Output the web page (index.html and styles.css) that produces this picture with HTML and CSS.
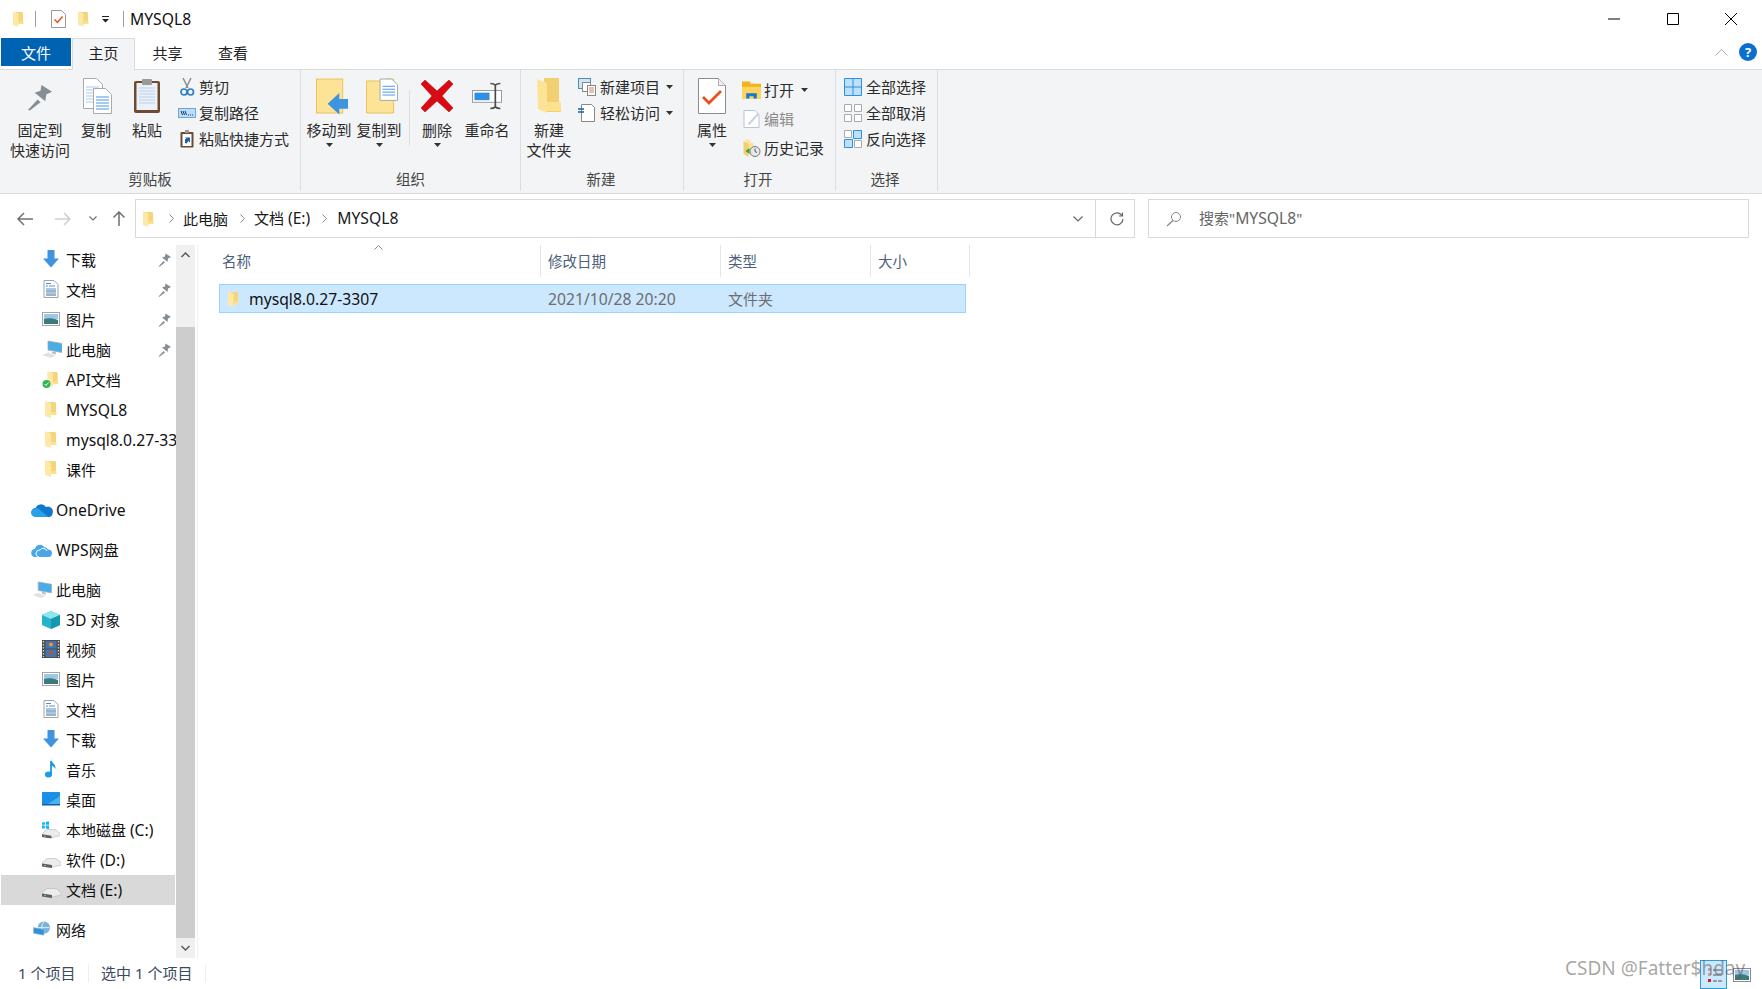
FILE: index.html
```html
<!DOCTYPE html>
<html lang="zh-CN">
<head>
<meta charset="utf-8">
<title>MYSQL8</title>
<link rel="stylesheet" href="styles.css">
</head>
<body>
<svg class="defs" aria-hidden="true">
  <symbol id="folder" viewBox="0 0 13 17">
    <path d="M4 1h7l1 1v11.500H5z" fill="#f4d57c"/>
    <path d="M1 0l6 2.500V17l-6-2z" fill="#fde8a6"/>
    <path d="M7 11h5.500v3H7z" fill="#fbe28f"/>
  </symbol>
  <symbol id="pin" viewBox="0 0 28 28">
    <path d="M15 1l11 7-6 3-1 7-11-9 6-2z" fill="#868e95"/>
    <path d="M1 27l10-11 3 3L3 27.500z" fill="#868e95"/>
  </symbol>
  <symbol id="dl" viewBox="0 0 18 18">
    <path d="M5.500 0h7v8.500H17L9 17.500 1 8.500h4.500z" fill="#3f94df"/>
  </symbol>
  <symbol id="doc" viewBox="0 0 16 18">
    <path d="M1 .5h10l4 4v13H1z" fill="#fff" stroke="#a4a4a4"/>
    <path d="M3 3.500h5M3 6h2M6 6h6M3 9h10M3 11h10M3 13h10M3 15h10" stroke="#4a93d6"/>
    <path d="M3 11h10M3 15h10" stroke="#9a9a9a"/>
  </symbol>
  <symbol id="pic" viewBox="0 0 18 14">
    <rect x=".5" y=".5" width="17" height="13" fill="#fff" stroke="#a5a5a5"/>
    <path d="M2 2h14v5H2z" fill="#9cc6ea"/>
    <path d="M2 7c4-1 9-1 14 1v4H2z" fill="#3d7b78"/>
  </symbol>
  <symbol id="pc" viewBox="0 0 20 18">
    <path d="M6 1l14 2.500v9L6 10z" fill="#45aeea" stroke="#a8a8a8" stroke-width=".8"/>
    <path d="M10 11.500l4 .8v2l-4-.8z" fill="#bdbdbd"/>
    <path d="M0 15l6-2.500 8 3L9 18z" fill="#e2e2e2"/>
  </symbol>
  <symbol id="cloud" viewBox="0 0 22 14">
    <path d="M5 13.500a4.500 4.500 0 0 1-.5-9A6 6 0 0 1 15 3.500 5 5 0 0 1 21.500 10c0 2-1.500 3.500-3.500 3.500z" fill="#0f79cf"/>
    <path d="M5 13.500a4.500 4.500 0 0 1-.5-9c2 0 4 1 5 2.500l8 6.500z" fill="#2aa0e8"/>
  </symbol>
  <symbol id="cloud2" viewBox="0 0 22 14">
    <path d="M4.500 13.500a4 4 0 0 1-.5-8A5 5 0 0 1 13 3.500a4.500 4.500 0 0 1 4 2.500 3.800 3.800 0 0 1 1 7.500z" fill="#4aa6ea"/>
    <path d="M8 13.500a3.500 3.500 0 0 1 1-7 4 4 0 0 1 7 1" fill="none" stroke="#fff" stroke-width="1"/>
  </symbol>
  <symbol id="hdd" viewBox="0 0 19 11">
    <path d="M0 6L5 1.500h9l5 4V8L9 10.500 0 9z" fill="#ececec" stroke="#b5b5b5" stroke-width=".6"/>
    <path d="M0 6.500l10 1.500v3L0 9.500z" fill="#5f5f5f"/>
    <path d="M2 8h2v1H2z" fill="#5fd07c"/>
  </symbol>
</svg>

<header class="titlebar">
  <svg class="i-title"><use href="#folder"/></svg>
  <span class="tsep tsep-a"></span>
  <svg class="qa-doc" viewBox="0 0 15 18"><path d="M.5.500h10l4 4v13H.5z" fill="#fff" stroke="#999"/><path d="M3.500 9.500l3 3 5-6" fill="none" stroke="#e8501f" stroke-width="1.500"/></svg>
  <svg class="i-title i-title-b"><use href="#folder"/></svg>
  <svg class="qa-drop" viewBox="0 0 7 7"><path d="M0 0h7v1H0zM0 3h7L3.500 6.500z" fill="#222"/></svg>
  <span class="tsep tsep-b"></span>
  <span class="title lat">MYSQL8</span>
  <div class="winctl">
    <svg viewBox="0 0 12 12"><path d="M0 6h12" stroke="#000"/></svg>
    <svg viewBox="0 0 12 12"><path d="M.5.500h11v11H.5z" fill="none" stroke="#000"/></svg>
    <svg viewBox="0 0 12 12"><path d="M0 0l12 12M12 0L0 12" stroke="#000"/></svg>
  </div>
</header>

<nav class="tabs">
  <span class="tab tab-file">文件</span>
  <span class="tab tab-on">主页</span>
  <span class="tab tab-share">共享</span>
  <span class="tab tab-view">查看</span>
  <span class="tabs-right">
    <svg class="collapse" viewBox="0 0 13 7"><path d="M.5 6.500l6-6 6 6" fill="none" stroke="#aaa"/></svg>
    <span class="help">?</span>
  </span>
</nav>

<section class="ribbon">
  <div class="group g1">
    <div class="gbody">
      <div class="lg w64"><span class="lgicon"><svg class="ic30"><use href="#pin"/></svg></span><span>固定到<br>快速访问</span></div>
      <div class="lg w48"><span class="lgicon"><svg class="ic-big ic-copy" viewBox="0 0 30 36"><path d="M.5.500h13l6 6v24H.5z" fill="#fff" stroke="#aaa"/><path d="M3 9h13M3 12h13M3 15h13M3 18h13M3 21h13M3 24h13" stroke="#a9c8ee"/><path d="M10.500 10.500h12l6 6v19h-18z" fill="#fff" stroke="#aaa"/><path d="M13 19h13M13 22h13M13 25h13M13 28h13M13 31h13" stroke="#4c95e4"/></svg></span><span>复制</span></div>
      <div class="lg w54"><span class="lgicon"><svg class="ic-big" viewBox="0 0 28 36"><rect x="1" y="3" width="26" height="32" rx="2" fill="#6d4a30"/><rect x="3.500" y="5" width="21" height="27" fill="#eaf1f8"/><path d="M6 10h16M6 13h16M6 16h16M6 19h16M6 22h16M6 25h16" stroke="#bcd2e8"/><rect x="9" y="1" width="10" height="6" rx="1" fill="#9a9a9a"/></svg></span><span>粘贴</span></div>
      <div class="col c1">
        <div class="sm"><svg class="sic" viewBox="0 0 14 18"><path d="M3 0l5 10M11 0L6 10" stroke="#8d8d8d" stroke-width="1.500"/><circle cx="4" cy="14" r="3" fill="none" stroke="#2a80c9" stroke-width="1.700"/><circle cx="10.500" cy="14" r="3" fill="none" stroke="#2a80c9" stroke-width="1.700"/></svg><span>剪切</span></div>
        <div class="sm"><svg class="sic" viewBox="0 0 18 12"><rect x=".5" y="1.500" width="17" height="9" fill="#bddcf7" stroke="#6aa8dc"/><path d="M3 4l1.500 4M5 4l1.500 4M7 4l1.500 4" stroke="#1a3a5a"/><path d="M10 8h1M12 8h1M14 8h1" stroke="#1a3a5a"/></svg><span>复制路径</span></div>
        <div class="sm"><svg class="sic" viewBox="0 0 14 18"><rect x=".5" y="2" width="13" height="15.500" rx="1" fill="#6d4a30"/><rect x="2.500" y="4" width="9" height="12" fill="#fff"/><rect x="5" y="0" width="4" height="3" fill="#999"/><path d="M5 13V9h1.500L5 7.500h5v5L8.500 11 6.500 13.500z" fill="#1d5fa8"/></svg><span>粘贴快捷方式</span></div>
      </div>
    </div>
    <div class="glabel">剪贴板</div>
  </div>

  <div class="group g2">
    <div class="gbody">
      <div class="lg w56"><span class="lgicon"><svg class="ic-mv" viewBox="0 0 34 37"><rect x=".5" y=".5" width="27" height="35" fill="#fde396" stroke="#eac25a"/><path d="M12 26l12-11v6h9v10h-9v6z" fill="#3f94df"/></svg></span><span>移动到</span><svg class="caret" viewBox="0 0 7 4"><path d="M0 0h7L3.500 4z"/></svg></div>
      <div class="lg w44"><span class="lgicon"><svg class="ic-mv" viewBox="0 0 34 37"><path d="M.5 2.500h20v-2h8v35h-28z" fill="#fde396" stroke="#eac25a"/><path d="M14.500.500h12l6 6v16h-18z" fill="#fff" stroke="#9aa"/><path d="M17 8h13M17 11h13M17 14h13M17 17h13" stroke="#4c95e4"/></svg></span><span>复制到</span><svg class="caret" viewBox="0 0 7 4"><path d="M0 0h7L3.500 4z"/></svg></div>
      <span class="vsep"></span>
      <div class="lg w54"><span class="lgicon"><svg class="ic-x" viewBox="0 0 32 32"><path d="M4 0l12 11L28 0l4 4-11 12 11 12-4 4-12-11L4 32l-4-4 11-12L0 4z" fill="#d90a14" stroke="#a00" stroke-width=".5"/></svg></span><span>删除</span><svg class="caret" viewBox="0 0 7 4"><path d="M0 0h7L3.500 4z"/></svg></div>
      <div class="lg w46"><span class="lgicon"><svg class="ic-big2" viewBox="0 0 36 34"><rect x=".5" y="10.500" width="35" height="14" fill="#fff" stroke="#8a8a8a"/><rect x="3" y="13" width="18" height="9" fill="#2f8fe0"/><path d="M22 2c3 0 5 1 6 2 1-1 3-2 6-2M28 4v26M22 32c3 0 5-1 6-2 1 1 3 2 6 2" fill="none" stroke="#4a4a4a" stroke-width="2"/></svg></span><span>重命名</span></div>
    </div>
    <div class="glabel">组织</div>
  </div>

  <div class="group g3">
    <div class="gbody">
      <div class="lg w56"><span class="lgicon"><svg class="ic-nf" viewBox="0 0 24 35"><path d="M7 0h15v27h2v7H8z" fill="#f2cf70"/><path d="M0 1l10 4v30L1 31z" fill="#fde396"/><path d="M10 24h14v9H10z" fill="#fbe28f"/></svg></span><span>新建<br>文件夹</span></div>
      <div class="col c3">
        <div class="sm"><svg class="sic2" viewBox="0 0 18 18"><rect x=".5" y=".5" width="12" height="10" fill="#cfe5f8" stroke="#5a87ad"/><rect x="4.500" y="4.500" width="8" height="9" fill="#fff" stroke="#888"/><rect x="9.500" y="7.500" width="8" height="10" fill="#fff" stroke="#888"/><path d="M11 10h5M11 12h5M11 14h5" stroke="#e07a7a"/></svg><span>新建项目</span><svg class="mini" viewBox="0 0 7 4"><path d="M0 0h7L3.500 4z"/></svg></div>
        <div class="sm"><svg class="sic2" viewBox="0 0 18 18"><path d="M3.500.500h10l3 3v14h-13z" fill="#fff" stroke="#888"/><path d="M0 5h6M0 8h6" stroke="#1d5fa8" stroke-width="1.300"/></svg><span>轻松访问</span><svg class="mini" viewBox="0 0 7 4"><path d="M0 0h7L3.500 4z"/></svg></div>
      </div>
    </div>
    <div class="glabel">新建</div>
  </div>

  <div class="group g4">
    <div class="gbody">
      <div class="lg w56"><span class="lgicon"><svg class="ic-big2" viewBox="0 0 28 36"><path d="M.5.500h20l7 7v28H.5z" fill="#fff" stroke="#8d8d8d"/><path d="M20.500.500v7h7" fill="#eee" stroke="#aaa"/><path d="M5 19l6 6L23 13" fill="none" stroke="#e8501f" stroke-width="2.800"/></svg></span><span>属性</span><svg class="caret" viewBox="0 0 7 4"><path d="M0 0h7L3.500 4z"/></svg></div>
      <div class="col c4">
        <div class="sm"><svg class="sic3" viewBox="0 0 18 16"><path d="M0 0h8v2h10v14H0z" fill="#f2b21d"/><path d="M0 5h18v11H0z" fill="#fcd45f"/><path d="M4 16v-5h10v5h-3v-2H7v2z" fill="#1479d0"/></svg><span>打开</span><svg class="mini mini-o" viewBox="0 0 7 4"><path d="M0 0h7L3.500 4z"/></svg></div>
        <div class="sm sm-dim"><svg class="sic3" viewBox="0 0 18 18"><path d="M1.500.500h11l4 4v13h-15z" fill="#fff" stroke="#b8c4d8"/><path d="M5 14L15 3l1.500 1.500L7 15z" fill="#c8d4e4"/></svg><span>编辑</span></div>
        <div class="sm"><svg class="sic3" viewBox="0 0 18 18"><path d="M3 0l5 2v2h3v10H4z" fill="#fde396"/><path d="M1 2l5 3v13l-5-3z" fill="#f2cf70"/><circle cx="12.500" cy="12.500" r="5" fill="#e8e8e8" stroke="#777"/><path d="M12.500 9.500v3l2 1" fill="none" stroke="#555"/><path d="M3 12l4-3v6z" fill="#2aa83a"/></svg><span>历史记录</span></div>
      </div>
    </div>
    <div class="glabel">打开</div>
  </div>

  <div class="group g5">
    <div class="gbody">
      <div class="col c5">
        <div class="sm"><svg class="sic" viewBox="0 0 18 18"><path d="M.5.500h17v17H.5z" fill="#bfe0fa" stroke="#2f8fe0"/><path d="M9 0v18M0 9h18" stroke="#2f8fe0"/></svg><span>全部选择</span></div>
        <div class="sm"><svg class="sic" viewBox="0 0 18 18"><path d="M.5.500h7v7h-7zM10.500.500h7v7h-7zM.5 10.500h7v7h-7zM10.500 10.500h7v7h-7z" fill="#fff" stroke="#aaa"/></svg><span>全部取消</span></div>
        <div class="sm"><svg class="sic" viewBox="0 0 18 18"><path d="M.5.500h7v7h-7zM10.500 10.500h7v7h-7z" fill="#fff" stroke="#aaa"/><path d="M9.500.500h8v8h-8zM.5 9.500h8v8h-8z" fill="#bfe0fa" stroke="#2f8fe0"/></svg><span>反向选择</span></div>
      </div>
    </div>
    <div class="glabel">选择</div>
  </div>
</section>

<section class="addr">
  <div class="navbtns">
    <svg class="nb" viewBox="0 0 16 14"><path d="M7 1L1 7l6 6M1 7h15" fill="none" stroke="#6f6f6f" stroke-width="1.500"/></svg>
    <svg class="nb nb-fw" viewBox="0 0 16 14"><path d="M9 1l6 6-6 6M15 7H0" fill="none" stroke="#cfcfcf" stroke-width="1.500"/></svg>
    <svg class="nb-down" viewBox="0 0 8 5"><path d="M.5.500L4 4 7.500.500" fill="none" stroke="#6f6f6f" stroke-width="1.200"/></svg>
    <svg class="nb-up" viewBox="0 0 12 15"><path d="M.5 6.500L6 1l5.500 5.500M6 1v14" fill="none" stroke="#6f6f6f" stroke-width="1.500"/></svg>
  </div>
  <div class="crumbs">
    <svg class="i-crumb"><use href="#folder"/></svg>
    <svg class="gt gt-a" viewBox="0 0 5 9"><path d="M.5.500l4 4-4 4" fill="none" stroke="#888"/></svg>
    <span class="cb">此电脑</span>
    <svg class="gt gt-b" viewBox="0 0 5 9"><path d="M.5.500l4 4-4 4" fill="none" stroke="#888"/></svg>
    <span class="cb">文档 <span class="lat">(E:)</span></span>
    <svg class="gt gt-c" viewBox="0 0 5 9"><path d="M.5.500l4 4-4 4" fill="none" stroke="#888"/></svg>
    <span class="cb lat">MYSQL8</span>
    <svg class="cdrop" viewBox="0 0 10 6"><path d="M.5.500L5 5 9.500.500" fill="none" stroke="#666" stroke-width="1.200"/></svg>
    <span class="refresh"><svg viewBox="0 0 14 14"><path d="M12 3.500A6 6 0 1 0 13 7M12.500 .500v3.500H9" fill="none" stroke="#666" stroke-width="1.200"/></svg></span>
  </div>
  <div class="search">
    <svg class="mag" viewBox="0 0 16 16"><circle cx="10" cy="6" r="4.500" fill="none" stroke="#888"/><path d="M7 9.500L1 15" stroke="#888" stroke-width="1.300"/></svg>
    <span class="search-t">搜索"<span class="lat">MYSQL8</span>"</span>
  </div>
</section>

<main class="content">
  <aside class="side">
    <div class="tree">
      <div class="row"><svg class="ri"><use href="#dl"/></svg><span class="rt">下载</span><svg class="rpin"><use href="#pin"/></svg></div>
      <div class="row"><svg class="ri"><use href="#doc"/></svg><span class="rt">文档</span><svg class="rpin"><use href="#pin"/></svg></div>
      <div class="row"><svg class="ri"><use href="#pic"/></svg><span class="rt">图片</span><svg class="rpin"><use href="#pin"/></svg></div>
      <div class="row"><svg class="ri ri-pc"><use href="#pc"/></svg><span class="rt">此电脑</span><svg class="rpin"><use href="#pin"/></svg></div>
      <div class="row row-lat"><svg class="ri ri-f" viewBox="0 0 18 18"><use href="#folder" width="13" height="16" x="4" y="0"/><circle cx="4.500" cy="13" r="4" fill="#35b455"/><path d="M2.500 13l1.500 1.500 2.500-3" fill="none" stroke="#fff"/></svg><span class="rt"><span class="lat">API</span>文档</span></div>
      <div class="row row-lat"><svg class="ri ri-f"><use href="#folder" width="13" height="17" x="2" y="0"/></svg><span class="rt lat">MYSQL8</span></div>
      <div class="row row-lat"><svg class="ri ri-f"><use href="#folder" width="13" height="17" x="2" y="0"/></svg><span class="rt lat">mysql8.0.27-3307</span></div>
      <div class="row"><svg class="ri ri-f"><use href="#folder" width="13" height="17" x="2" y="0"/></svg><span class="rt">课件</span></div>

      <div class="row row-top row-0 row-lat"><svg class="ri0"><use href="#cloud"/></svg><span class="rt lat">OneDrive</span></div>
      <div class="row row-top row-0 row-lat"><svg class="ri0"><use href="#cloud2"/></svg><span class="rt"><span class="lat">WPS</span>网盘</span></div>
      <div class="row row-top row-0"><svg class="ri0"><use href="#pc"/></svg><span class="rt">此电脑</span></div>

      <div class="row row-lat"><svg class="ri" viewBox="0 0 18 18"><path d="M9 0l9 4v10l-9 4-9-4V4z" fill="#25b3c9"/><path d="M9 0l9 4-9 4-9-4z" fill="#8fe6ee"/><path d="M9 8v10l9-4V4z" fill="#1497b0"/></svg><span class="rt"><span class="lat">3D</span> 对象</span></div>
      <div class="row"><svg class="ri" viewBox="0 0 18 18"><rect width="18" height="18" fill="#4d4d4d"/><rect x="3.500" y="1" width="11" height="7.500" fill="#4b6fae"/><rect x="3.500" y="9.500" width="11" height="7.500" fill="#3d78b6"/><circle cx="9" cy="4.500" r="2" fill="#d4a13a"/><circle cx="9" cy="13" r="2" fill="#c74b30"/><path d="M1.500 1v16M16.500 1v16" stroke="#ccc" stroke-dasharray="1.500 1.500" stroke-width="1.300"/></svg><span class="rt">视频</span></div>
      <div class="row"><svg class="ri"><use href="#pic"/></svg><span class="rt">图片</span></div>
      <div class="row"><svg class="ri"><use href="#doc"/></svg><span class="rt">文档</span></div>
      <div class="row"><svg class="ri"><use href="#dl"/></svg><span class="rt">下载</span></div>
      <div class="row"><svg class="ri" viewBox="0 0 18 18"><path d="M9 1v13" stroke="#1b9be8" stroke-width="1.800"/><ellipse cx="6.500" cy="14.500" rx="3.600" ry="3" fill="#1b9be8"/><path d="M9 0c1 3 5 4 4.500 9-.5-2-3-3-4.500-3.500z" fill="#1b9be8"/></svg><span class="rt">音乐</span></div>
      <div class="row"><svg class="ri" viewBox="0 0 18 14"><rect width="18" height="13" rx=".5" fill="#1b8fe6"/><path d="M0 12h18v1.500H0z" fill="#0e5fa8"/><path d="M6 12L18 4v8z" fill="#4db1f0"/></svg><span class="rt">桌面</span></div>
      <div class="row row-lat"><svg class="ri" viewBox="0 0 19 18"><use href="#hdd" y="7" width="19" height="11"/><path d="M0 1l3-.5v3H0zM4 .3L7.500 0v3.500H4zM0 4.300h3v3H0zM4 4.300h3.500V8L4 7.500z" fill="#12b5f0"/></svg><span class="rt">本地磁盘 <span class="lat">(C:)</span></span></div>
      <div class="row row-lat"><svg class="ri ri-h"><use href="#hdd"/></svg><span class="rt">软件 <span class="lat">(D:)</span></span></div>
      <div class="row row-lat row-sel"><svg class="ri ri-h"><use href="#hdd"/></svg><span class="rt">文档 <span class="lat">(E:)</span></span></div>

      <div class="row row-top row-0"><svg class="ri0" viewBox="0 0 20 18"><circle cx="12" cy="7" r="6.500" fill="#7ab4dc"/><path d="M12 1c-3 3-3 9 0 12M6 7h12" fill="none" stroke="#e4f1fa"/><path d="M1 7l11 2v6L1 13z" fill="#2a93dc" stroke="#9fb4c4" stroke-width=".6"/></svg><span class="rt">网络</span></div>
    </div>
    <div class="sbar">
      <span class="sb-btn"><svg viewBox="0 0 9 6"><path d="M.5 5L4.500 1l4 4" fill="none" stroke="#555" stroke-width="1.400"/></svg></span>
      <span class="sb-track"></span>
      <span class="sb-thumb"></span>
      <span class="sb-btn sb-btn-d"><svg viewBox="0 0 9 6"><path d="M.5 1l4 4 4-4" fill="none" stroke="#555" stroke-width="1.400"/></svg></span>
    </div>
  </aside>

  <div class="files">
    <div class="fhead">
      <span class="fh fh-name">名称<svg class="sort" viewBox="0 0 9 5"><path d="M.5 4.500l4-4 4 4" fill="none" stroke="#8a8a8a"/></svg></span>
      <span class="fh fh-date">修改日期</span>
      <span class="fh fh-type">类型</span>
      <span class="fh fh-size">大小</span>
    </div>
    <div class="frow">
      <span class="fc fc-name lat"><svg class="fi"><use href="#folder"/></svg>mysql8.0.27-3307</span>
      <span class="fc fc-date lat">2021/10/28 20:20</span>
      <span class="fc fc-type">文件夹</span>
    </div>
  </div>
</main>

<footer class="status">
  <span class="st st-a">1 个项目</span>
  <span class="st st-b">选中 1 个项目</span>
  <span class="viewbtns">
    <span class="vb-on"><svg viewBox="0 0 18 20"><path d="M3 3h3v3H3zM3 8h3v3H3z" fill="#c9a0a0"/><path d="M3 14h3v3H3z" fill="#c8202a"/><path d="M8 5h9M8 10h9M8 16h4M13 16h4" stroke="#555"/></svg></span>
    <svg class="vb-off" viewBox="0 0 18 14"><rect x=".5" y=".5" width="17" height="13" fill="#fff" stroke="#8a8a8a"/><path d="M2 2h14v5H2z" fill="#9cc6ea"/><path d="M2 7c4-1 9-1 14 1v4H2z" fill="#3d7b78"/></svg>
  </span>
</footer>

<div class="watermark">CSDN @Fatter$hday</div>
</body>
</html>
```

FILE: styles.css
```css
* { box-sizing: border-box; }
html, body { margin: 0; height: 100%; }
body {
  width: 1762px;
  height: 989px;
  overflow: hidden;
  position: relative;
  background: #fff;
  color: #1a1a1a;
  font-family: "Noto Sans", "Noto Sans CJK SC", sans-serif;
  font-size: 15px;
  display: flex;
  flex-direction: column;
}
.defs { width: 0; height: 0; position: absolute; }
svg { display: block; flex: none; }
.lat { font-size: 15.700px; }

/* title bar */
.titlebar { height: 38px; display: flex; align-items: center; padding-left: 12px; flex: none; }
.i-title { width: 12px; height: 16px; }
.i-title-b { margin-left: 11px; }
.tsep { width: 1px; height: 16px; background: #a0a0a0; }
.tsep-a { margin-left: 11px; }
.tsep-b { margin-left: 14px; }
.qa-doc { width: 15px; height: 18px; margin-left: 15px; }
.qa-drop { width: 7px; height: 7px; margin-left: 13px; }
.title { margin-left: 6px; color: #111; padding-bottom: 1px; }
.winctl { margin-left: auto; display: flex; align-items: center; gap: 46.500px; padding-right: 25px; }
.winctl svg { width: 12px; height: 12px; }

/* tabs */
.tabs { height: 32px; display: flex; align-items: flex-start; position: relative; border-bottom: 1px solid #dadbdc; flex: none; padding-left: 1px; }
.tab { height: 28px; display: flex; align-items: center; justify-content: center; color: #222; }
.tab-file { width: 70px; background: #0063b1; color: #fff; }
.tab-on { width: 63px; height: 32px; background: #f3f4f6; border: 1px solid #dadbdc; border-bottom: 0; padding-bottom: 4px; margin-left: 1px; }
.tab-share { width: 65px; }
.tab-view { width: 66px; }
.tabs-right { margin-left: auto; display: flex; align-items: center; height: 28px; padding: 0 5px 0 0; gap: 11px; }
.collapse { width: 13px; height: 7px; }
.help { width: 18px; height: 18px; border-radius: 50%; background: #0a6fd0; color: #fff; font-size: 13px; font-weight: 700; display: flex; align-items: center; justify-content: center; }

/* ribbon */
.ribbon { height: 124px; background: #f3f4f6; border-bottom: 1px solid #dadbdc; display: flex; flex: none; padding-bottom: 2px; color: #2b2b2b; }
.group { display: flex; flex-direction: column; border-right: 1px solid #dcdde0; }
.gbody { height: 98px; display: flex; line-height: 20px; }
.glabel { text-align: center; height: 23px; line-height: 23px; font-size: 14.500px; color: #444; }
.g1 { width: 301px; }
.g1 .gbody { padding-left: 8px; }
.g2 { width: 220px; }
.g3 { width: 163px; }
.g3 .glabel { padding-right: 2px; }
.g4 { width: 152px; }
.g4 .glabel { padding-right: 3px; }
.g5 { width: 102px; }
.g5 .glabel { padding-right: 3px; }
.lg { display: flex; flex-direction: column; align-items: center; text-align: center; flex: none; white-space: nowrap; }
.lgicon { height: 50px; padding-top: 8px; display: flex; align-items: flex-start; justify-content: center; flex: none; }
.w64 { width: 64px; }
.w48 { width: 48px; }
.w54 { width: 54px; }
.w56 { width: 56px; }
.w44 { width: 44px; }
.w46 { width: 46px; }
.ic30 { width: 27px; height: 27px; margin-top: 6px; }
.ic-big { width: 30px; height: 36px; }
.ic-copy { margin-left: 3px; }
.ic-big2 { width: 30px; height: 36px; }
.ic-mv { width: 33px; height: 37px; margin-left: 7px; }
.ic-x { width: 32px; height: 32px; margin-top: 2px; }
.ic-nf { width: 24px; height: 35px; }
.caret { width: 7px; height: 4px; fill: #333; margin-top: 3px; }
.vsep { width: 1px; height: 56px; background: #dcdde0; margin: 20px 0 0 8px; flex: none; }
.col { display: flex; flex-direction: column; padding-top: 4px; }
.sm { height: 26px; display: flex; align-items: center; white-space: nowrap; gap: 3px; }
.sm > svg:first-child { flex: none; }
.sic { width: 18px; height: 18px; }
.sic2 { width: 20px; height: 18px; }
.sic3 { width: 19px; height: 18px; }
.c1 { margin-left: 4px; }
.c4 .sm { height: 29px; }
.c4 { padding-top: 5px; margin-left: 2px; }
.sm-dim { color: #8a8a8a; }
.c5 { margin-left: 8px; }
.c5 .sm { gap: 4px; }
.mini { width: 7px; height: 4px; fill: #333; margin-left: 3px; }
.mini-o { margin-left: 4px; }

/* address */
.addr { height: 51px; padding-top: 5px; padding-bottom: 7px; display: flex; flex: none; }
.navbtns { width: 135px; display: flex; align-items: center; padding-left: 17px; }
.nb { width: 16px; height: 14px; }
.nb-fw { margin-left: 22px; }
.nb-down { width: 8px; height: 5px; margin-left: 18px; }
.nb-up { width: 12px; height: 15px; margin-left: 16px; }
.crumbs { width: 1000px; border: 1px solid #d9d9d9; display: flex; align-items: center; padding-left: 6px; }
.i-crumb { width: 12px; height: 16px; }
.gt { width: 5px; height: 9px; }
.gt-a { margin-left: 15px; }
.gt-b, .gt-c { margin-left: 12px; }
.cb { margin-left: 9px; color: #1a1a1a; padding-bottom: 1px; }
.cb.lat { margin-left: 10px; }
.cdrop { width: 10px; height: 6px; margin-left: auto; margin-right: 12px; }
.refresh { width: 39px; height: 100%; border-left: 1px solid #d9d9d9; display: flex; align-items: center; justify-content: center; padding-left: 4px; }
.refresh svg { width: 14px; height: 14px; }
.search { width: 601px; margin-left: 13px; border: 1px solid #d9d9d9; display: flex; align-items: center; padding-left: 17px; gap: 17px; color: #666; }
.search-t { padding-bottom: 1px; }
.mag { width: 16px; height: 16px; }

/* content */
.content { height: 715px; display: flex; flex: none; }
.side { width: 198px; display: flex; border-right: 1px solid #f0f0f0; height: 713px; flex: none; }
.tree { width: 176px; overflow: hidden; flex: none; padding-left: 1px; }
.row { height: 30px; width: 174px; display: flex; align-items: center; padding: 0 0 2px 41px; position: relative; color: #111; }
.row-lat { padding-bottom: 0; }
.row-0 { padding-left: 30px; }
.row-top { margin-top: 10px; }
.row-sel { background: #d9d9d9; }
.ri { width: 18px; height: 18px; }
.ri-pc { width: 20px; margin-right: -2px; }
.ri-h { width: 19px; height: 11px; margin-right: -1px; margin-top: 5px; }
.ri0 { width: 22px; height: 17px; }
.rt { margin-left: 6px; white-space: nowrap; }
.row-0 .rt { margin-left: 3px; }
.rpin { width: 14px; height: 14px; position: absolute; left: 157px; top: 8px; }
.sbar { width: 19px; display: flex; flex-direction: column; flex: none; }
.sb-btn { height: 20px; background: #f0f0f0; display: flex; align-items: center; justify-content: center; }
.sb-btn svg { width: 9px; height: 6px; }
.sb-track { height: 62px; background: #f0f0f0; }
.sb-thumb { flex: 1; background: #cdcdcd; }

.files { flex: 1; padding-left: 21px; }
.fhead { height: 39px; width: 751px; display: flex; align-items: stretch; color: #4c607a; font-size: 14.500px; }
.fh { display: flex; align-items: center; padding: 0 0 2px 7px; border-right: 1px solid #e5e5e5; position: relative; height: 32px; }
.fh-name { width: 322px; padding-left: 3px; }
.fh-date { width: 180px; }
.fh-type { width: 150px; }
.fh-size { width: 99px; }
.sort { width: 9px; height: 5px; position: absolute; left: 155px; top: 0; }
.frow { width: 747px; height: 29px; background: #cce8ff; border: 1px solid #99d1ff; display: flex; align-items: center; }
.fc { display: flex; align-items: center; white-space: nowrap; }
.fc-name { width: 321px; padding-left: 7px; color: #111; }
.fi { width: 12px; height: 16px; margin-right: 10px; }
.fc-date { width: 180px; padding-left: 7px; color: #6d6d6d; }
.fc-type { padding-left: 7px; color: #6d6d6d; }

/* status */
.status { flex: 1; display: flex; align-items: center; position: relative; color: #3a4a5e; font-size: 15px; }
.st { display: flex; align-items: center; height: 18px; margin-bottom: 4px; }
.st-a { width: 89px; padding-left: 18px; border-right: 1px solid #eee; }
.st-b { width: 117px; padding-left: 12px; border-right: 1px solid #eee; }
.viewbtns { margin-left: auto; display: flex; align-items: center; gap: 6px; padding-right: 11px; }
.vb-on { width: 27px; height: 29px; background: #cce8ff; border: 1px solid #26a0da; display: flex; align-items: center; justify-content: center; }
.vb-on svg { width: 18px; height: 20px; }
.vb-off { width: 18px; height: 14px; }

.watermark { position: absolute; left: 1565px; top: 955px; font-size: 19px; color: rgba(90, 90, 90, .55); white-space: nowrap; }
```
